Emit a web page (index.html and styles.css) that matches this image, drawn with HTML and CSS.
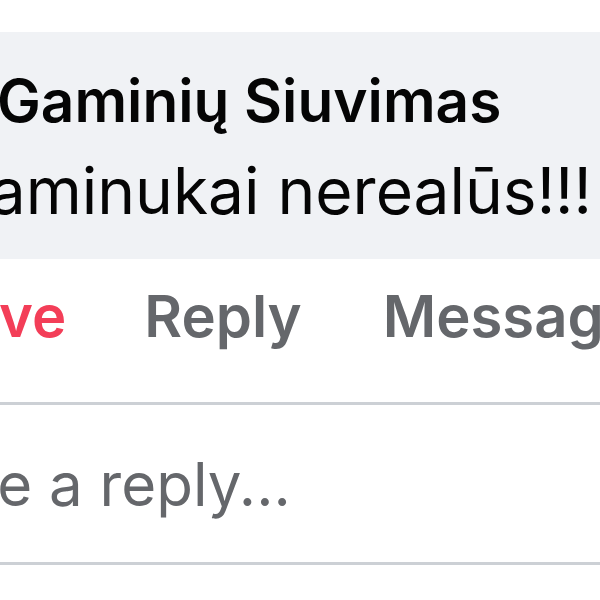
FILE: index.html
```html
<!DOCTYPE html>
<html lang="lt">
<head>
<meta charset="utf-8">
<link rel="stylesheet" href="styles.css">
</head>
<body>
<div class="viewport">
  <div class="bubble">
    <div class="name">Gaminių Siuvimas</div>
    <div class="text">Gaminukai nerealūs!!!</div>
  </div>
  <div class="actions">
    <span class="act love">Love</span>
    <span class="act">Reply</span>
    <span class="act message">Message</span>
  </div>
  <div class="reply-box">
    <span class="placeholder">Write a reply...</span>
  </div>
</div>
</body>
</html>
```
FILE: styles.css
```css
html, body {
  margin: 0;
  padding: 0;
  background: #ffffff;
}
body {
  font-family: Inter, "Noto Sans", sans-serif;
  width: 600px;
  height: 600px;
  overflow: hidden;
}
.viewport {
  width: 600px;
  overflow: hidden;
  padding-top: 32px;
}
.bubble {
  background: #f0f2f5;
  padding: 29px 0 22px 0;
  width: 700px;
}
.name {
  font-size: 58.5px;
  line-height: 80px;
  font-weight: 600;
  color: #050505;
  margin-left: -3px;
  white-space: nowrap;
}
.text {
  font-size: 64px;
  line-height: 92px;
  margin-top: 4px;
  color: #050505;
  margin-left: -58px;
  white-space: nowrap;
}
.actions {
  display: flex;
  gap: 78px;
  margin-top: 22px;
  margin-left: -68px;
  font-size: 58px;
  line-height: 70px;
  font-weight: 600;
  color: #65676b;
  white-space: nowrap;
}
.love {
  color: #f33e58;
}
.message {
  margin-left: 3px;
}
.reply-box {
  margin-top: 51px;
  border-top: 3px solid #ccd0d5;
  border-bottom: 3px solid #ccd0d5;
  padding: 39px 0 38px 0;
  width: 700px;
}
.placeholder {
  display: block;
  font-size: 60px;
  line-height: 80px;
  color: #65676b;
  margin-left: -117px;
  white-space: nowrap;
}
```
